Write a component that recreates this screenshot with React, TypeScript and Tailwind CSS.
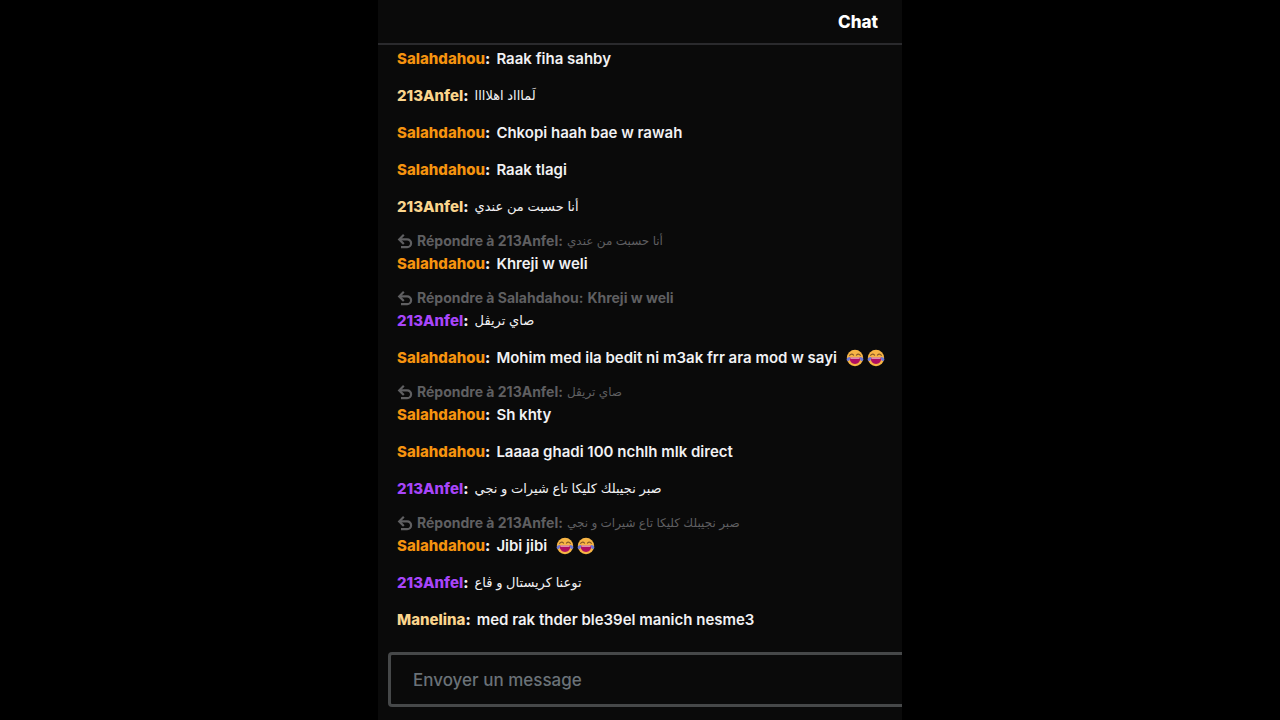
import React from "react"
import clsx from "clsx"

type Message = {
  user: string
  color: string
  text: string
  joy?: number
  replyTo?: string
  replyText?: string
}

const ORANGE = "text-[#f5930f]"
const SAND = "text-[#fbd58d]"
const PURPLE = "text-[#a845fa]"

const messages: Message[] = [
  { user: "Salahdahou", color: ORANGE, text: "Raak fiha sahby" },
  { user: "213Anfel", color: SAND, text: "لَماااد اهلاااا" },
  { user: "Salahdahou", color: ORANGE, text: "Chkopi haah bae w rawah" },
  { user: "Salahdahou", color: ORANGE, text: "Raak tlagi" },
  { user: "213Anfel", color: SAND, text: "أنا حسبت من عندي" },
  { user: "Salahdahou", color: ORANGE, text: "Khreji w weli", replyTo: "213Anfel", replyText: "أنا حسبت من عندي" },
  { user: "213Anfel", color: PURPLE, text: "صاي تريڨل", replyTo: "Salahdahou", replyText: "Khreji w weli" },
  { user: "Salahdahou", color: ORANGE, text: "Mohim med ila bedit ni m3ak frr ara mod w sayi", joy: 2 },
  { user: "Salahdahou", color: ORANGE, text: "Sh khty", replyTo: "213Anfel", replyText: "صاي تريڨل" },
  { user: "Salahdahou", color: ORANGE, text: "Laaaa ghadi 100 nchlh mlk direct" },
  { user: "213Anfel", color: PURPLE, text: "صبر نجيبلك كليكا تاع شيرات و نجي" },
  { user: "Salahdahou", color: ORANGE, text: "Jibi jibi", joy: 2, replyTo: "213Anfel", replyText: "صبر نجيبلك كليكا تاع شيرات و نجي" },
  { user: "213Anfel", color: PURPLE, text: "توعنا كريستال و ڨاع" },
  { user: "Manelina", color: SAND, text: "med rak thder ble39el manich nesme3" },
]

function ReplyIcon() {
  return (
    <svg viewBox="0 0 16 16" className="w-4 h-4 shrink-0" fill="none" stroke="currentColor" strokeWidth="2.2" aria-hidden="true">
      <path d="M6.800 1.800 2.200 6.400l4.600 4.600" />
      <path d="M2.400 6.400h7.800a3.900 3.900 0 0 1 3.900 3.900 3.900 3.900 0 0 1-3.900 3.900H4" />
    </svg>
  )
}

function Joy() {
  return (
    <svg viewBox="0 0 18 18" className="w-[18px] h-[18px] shrink-0" role="img" aria-label="joy">
      <circle cx="9" cy="9" r="8.2" fill="#f7b545" />
      <path d="M3.600 6.400Q5.600 4 7.600 6.200M10.400 6.200Q12.400 4 14.400 6.400" fill="none" stroke="#8a5a28" strokeWidth="1.100" strokeLinecap="round" />
      <path d="M3.600 8.600h10.800c0 4-2.200 6.400-5.400 6.400S3.600 12.600 3.600 8.600z" fill="#b00f62" />
      <path d="M4.200 8.600h9.600l-.4 1.200H4.600z" fill="#e9b9c4" />
      <path d="M.6 10.600C.8 8.800 2.200 8 4 8c.2 2-.4 4-1.800 4-.9 0-1.700-.6-1.600-1.400zM17.400 10.600C17.200 8.800 15.800 8 14 8c-.2 2 .4 4 1.800 4 .9 0 1.700-.6 1.600-1.400z" fill="#6c78d8" />
    </svg>
  )
}

function isArabic(text: string) {
  return /[\u0600-\u06ff]/.test(text)
}

function ChatMessage({ message }: { message: Message }) {
  const { user, color, text, joy, replyTo, replyText = "" } = message

  return (
    <li>
      {replyTo && (
        <div className="flex items-center gap-1 h-5 text-sm font-bold text-[#5f5f61]">
          <ReplyIcon />
          <span className="whitespace-nowrap">Répondre à {replyTo}:</span>
          <bdi className={clsx("whitespace-nowrap", isArabic(replyText) && "text-xs font-normal")}>{replyText}</bdi>
        </div>
      )}
      <div className="flex items-center gap-1.5 h-[26px] text-[15px] font-semibold text-[#f1f1f3]">
        <span className="font-extrabold">
          <span className={color}>{user}</span>:
        </span>
        <bdi className={clsx("whitespace-nowrap", isArabic(text) && "text-[13px] font-normal")}>{text}</bdi>
        {joy && (
          <span className="flex gap-[3px] pl-[3px]">
            {Array.from({ length: joy }, (_, i) => (
              <Joy key={i} />
            ))}
          </span>
        )}
      </div>
    </li>
  )
}

export default function App() {
  return (
    <div className="min-h-screen bg-black">
      <main className="flex flex-col min-h-screen w-full max-w-[524px] mx-auto overflow-hidden bg-[#0a0a0a] font-['Inter','DejaVu_Sans',sans-serif]">
        <header className="flex items-center justify-end h-[45px] pt-0.5 px-6 border-b-2 border-[#2a2a2d]">
          <h1 className="text-[17px] font-extrabold text-white">Chat</h1>
        </header>
        <ul className="flex flex-col gap-[11px] pt-px pl-[19px]">
          {messages.map((message, i) => (
            <ChatMessage key={i} message={message} />
          ))}
        </ul>
        <form className="pl-[10px] pt-[19px] pb-3">
          <input
            type="text"
            aria-label="Envoyer un message"
            placeholder="Envoyer un message"
            className="block w-full h-[55px] px-[22px] rounded-l border-3 border-r-0 border-[#464849] bg-transparent text-[17px] font-medium text-white placeholder:text-[#6a7278] outline-none"
          />
        </form>
      </main>
    </div>
  )
}
